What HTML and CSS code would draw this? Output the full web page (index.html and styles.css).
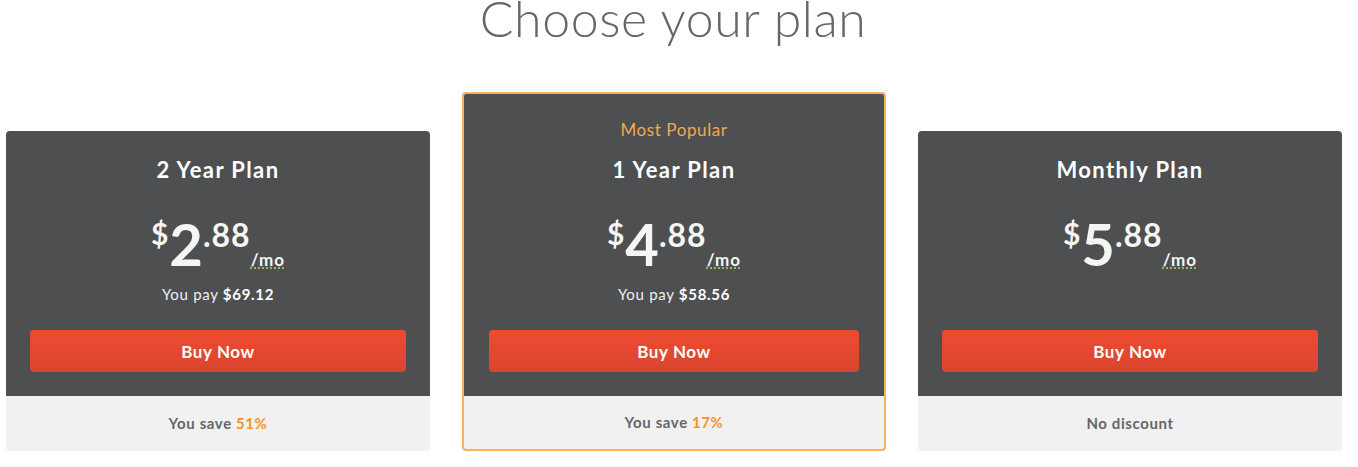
FILE: index.html
```html
<!DOCTYPE html>
<html lang="en">
<head>
    <meta charset="UTF-8">
    <meta name="viewport" content="width=device-width, initial-scale=1.0">
    <title>Choose your plan</title>
    <link rel="stylesheet" href="styles.css">
</head>
<body>
    <h1 class="page-title">Choose your plan</h1>

    <div class="plans">
        <div class="plan">
            <div class="plan-body">
                <h2 class="plan-name">2 Year Plan</h2>
                <div class="price">
                    <span class="currency">$</span><span class="amount">2</span><span class="cents">.88</span><abbr class="per" title="per month">/mo</abbr>
                </div>
                <p class="total">You pay <strong>$69.12</strong></p>
                <button class="buy">Buy Now</button>
            </div>
            <div class="plan-foot">You save <span class="save">51%</span></div>
        </div>

        <div class="plan plan-popular">
            <div class="plan-body">
                <p class="badge">Most Popular</p>
                <h2 class="plan-name">1 Year Plan</h2>
                <div class="price">
                    <span class="currency">$</span><span class="amount">4</span><span class="cents">.88</span><abbr class="per" title="per month">/mo</abbr>
                </div>
                <p class="total">You pay <strong>$58.56</strong></p>
                <button class="buy">Buy Now</button>
            </div>
            <div class="plan-foot">You save <span class="save">17%</span></div>
        </div>

        <div class="plan">
            <div class="plan-body">
                <h2 class="plan-name">Monthly Plan</h2>
                <div class="price">
                    <span class="currency">$</span><span class="amount">5</span><span class="cents">.88</span><abbr class="per" title="per month">/mo</abbr>
                </div>
                <p class="total">&nbsp;</p>
                <button class="buy">Buy Now</button>
            </div>
            <div class="plan-foot">No discount</div>
        </div>
    </div>
</body>
</html>
```

FILE: styles.css
```css
body {
    font-family: Lato, "Open Sans", Arial, sans-serif;
    background-color: #ffffff;
    color: #666;
    margin: 0;
    padding: 0;
}

.page-title {
    margin: -12px 0 0 0;
    padding-right: 12px;
    text-align: center;
    font-size: 50px;
    font-weight: 300;
    line-height: 60px;
    color: #666;
    letter-spacing: 0.6px;
}

.plans {
    display: flex;
    align-items: flex-end;
    gap: 32px;
    padding: 44px 16px 0 6px;
}

.plan {
    width: 424px;
    box-sizing: border-box;
    border-radius: 4px;
    overflow: hidden;
    background-color: #f1f1f1;
}

.plan-popular {
    border: 2px solid #f7b35c;
}

.plan-body {
    background-color: #4e4f51;
    color: #fff;
    text-align: center;
    padding: 26px 24px 24px;
}

.plan-popular .plan-body {
    padding: 26px 25px 24px;
}

.badge {
    margin: 0 0 17px;
    font-size: 17px;
    line-height: 20px;
    color: #f4a851;
    letter-spacing: 0.6px;
}

.plan-name {
    margin: 0;
    font-size: 22px;
    line-height: 26px;
    font-weight: 700;
    letter-spacing: 1.4px;
}

.price {
    margin-top: 32px;
    height: 69px;
    display: flex;
    justify-content: center;
    align-items: flex-start;
    color: #f5f5f3;
}

.currency {
    font-size: 30px;
    font-weight: 700;
    line-height: 30px;
    margin-top: 3px;
}

.amount {
    font-size: 58px;
    font-weight: 700;
    line-height: 58px;
    margin-left: 1px;
}

.cents {
    font-size: 32px;
    font-weight: 700;
    line-height: 32px;
    margin-top: 4px;
    letter-spacing: 1px;
}

.per {
    font-size: 17px;
    font-weight: 700;
    line-height: 20px;
    margin-top: 35px;
    letter-spacing: 1px;
    text-decoration: underline dotted #a5c86a;
    text-underline-offset: 2px;
}

.total {
    margin: 0;
    font-size: 15px;
    line-height: 20px;
    color: #f0f0f0;
    letter-spacing: 0.7px;
}

.total strong {
    font-weight: 700;
    color: #fff;
}

.buy {
    display: block;
    width: 100%;
    height: 42px;
    margin-top: 26px;
    border: none;
    border-radius: 4px;
    background: linear-gradient(#ee4b30, #da4530);
    color: #fff;
    font-family: inherit;
    font-size: 17px;
    font-weight: 700;
    letter-spacing: 0.6px;
    cursor: pointer;
}

.plan-foot {
    height: 55px;
    line-height: 55px;
    text-align: center;
    font-size: 15px;
    font-weight: 700;
    color: #666;
    letter-spacing: 0.6px;
}

.plan-popular .plan-foot {
    height: 53px;
    line-height: 53px;
}

.save {
    color: #f7931e;
}
```
